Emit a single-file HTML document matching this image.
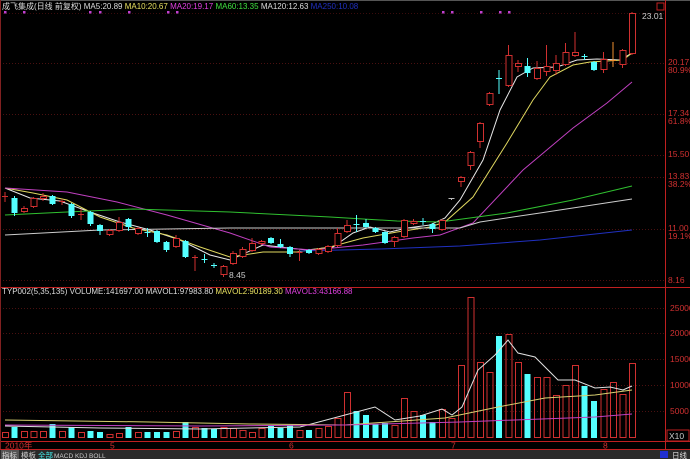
<!DOCTYPE html>
<html><head><meta charset="utf-8">
<style>
html,body{margin:0;padding:0;background:#000;width:690px;height:459px;overflow:hidden}
svg{display:block}
text{font-family:"Liberation Sans","Noto Sans CJK SC",sans-serif;font-size:8.5px}
</style></head><body>
<svg id="s" width="690" height="459" xmlns="http://www.w3.org/2000/svg">
<rect width="690" height="459" fill="#000"/>
<line x1="0" y1="0.5" x2="690" y2="0.5" stroke="#555"/>
<g id="grid"></g>
<line x1="665.5" y1="0" x2="665.5" y2="449" stroke="#c02020"/>
<line x1="0" y1="287.5" x2="690" y2="287.5" stroke="#c02020"/>
<line x1="0" y1="441.5" x2="690" y2="441.5" stroke="#c02020"/>
<line x1="0" y1="449.5" x2="690" y2="449.5" stroke="#c02020"/>
<line x1="0.5" y1="0" x2="0.5" y2="449" stroke="#802020"/>
<rect x="657" y="3" width="7" height="7" fill="none" stroke="#c02020"/>
<g id="lines"></g>
<g id="candles"></g>
<g id="vol"></g>
<text x="2" y="9" style="font-size:8px"><tspan fill="#ddd">成飞集成(日线 前复权) MA5:20.89 </tspan><tspan fill="#e8e060">MA10:20.67 </tspan><tspan fill="#e040e0">MA20:19.17 </tspan><tspan fill="#40e040">MA60:13.35 </tspan><tspan fill="#ddd">MA120:12.63 </tspan><tspan fill="#2030c0">MA250:10.08</tspan></text>
<text x="642" y="19" fill="#ccc">23.01</text>
<text x="229" y="278" fill="#ccc">8.45</text>
<text x="2" y="294" style="font-size:8px"><tspan fill="#ddd">TYP002(5,35,135) VOLUME:141697.00 MAVOL1:97983.80 </tspan><tspan fill="#e8e060">MAVOL2:90189.30 </tspan><tspan fill="#e040e0">MAVOL3:43166.88</tspan></text>
<g fill="#d03030">
<text x="668" y="65">20.17</text><text x="668" y="73">80.9%</text>
<text x="668" y="116">17.34</text><text x="668" y="124">61.8%</text>
<text x="668" y="157">15.50</text>
<text x="668" y="179">13.83</text><text x="668" y="187">38.2%</text>
<text x="668" y="231">11.00</text><text x="668" y="239">19.1%</text>
<text x="668" y="283">8.16</text>
<text x="670" y="311">25000</text><text x="670" y="336">20000</text>
<text x="670" y="362">15000</text><text x="670" y="388">10000</text>
<text x="670" y="414">5000</text>
<text x="5" y="448.5">2010年</text><text x="110" y="448.5">5</text><text x="289" y="448.5">6</text>
<text x="451" y="448.5">7</text><text x="603" y="448.5">8</text>
</g>
<rect x="667" y="430" width="22" height="11" fill="none" stroke="#c02020"/>
<text x="669" y="439" fill="#ccc">X10</text>
<rect x="0" y="450" width="690" height="9" fill="#2a2a2a"/>
<rect x="1" y="450" width="18" height="9" fill="#555"/>
<text x="2" y="458" fill="#ddd" style="font-size:7.5px">指标</text>
<text x="21" y="458" fill="#ccc" style="font-size:7.5px">模板</text>
<text x="38" y="458" fill="#4ee" style="font-size:7.5px">全部</text>
<text x="54" y="458" fill="#ccc" style="font-size:6.5px">MACD KDJ BOLL</text>
<rect x="660" y="451" width="8" height="7" fill="#2030d0"/>
<text x="672" y="458" fill="#ddd" style="font-size:7.5px">日线</text>
</svg>
<script>
const NS="http://www.w3.org/2000/svg";
function el(p,t,a){const e=document.createElementNS(NS,t);for(const k in a)e.setAttribute(k,a[k]);document.getElementById(p).appendChild(e);return e;}
[63,114,155,177,229,280].forEach(y=>el("grid","line",{x1:0,y1:y+.5,x2:665,y2:y+.5,stroke:"#4a1010","stroke-dasharray":"1,2"}));
[13].forEach(y=>el("grid","line",{x1:0,y1:y+.5,x2:665,y2:y+.5,stroke:"#3a0c0c","stroke-dasharray":"1,2"}));
[308,333,359,385,411].forEach(y=>el("grid","line",{x1:0,y1:y+.5,x2:665,y2:y+.5,stroke:"#4a1010","stroke-dasharray":"1,2"}));
[5,24,90,100,129,168,177,443,452,481,500,509].forEach(x=>el("grid","rect",{x:x-1,y:11,width:2.5,height:2.5,fill:"#c040d0"}));
const C=[
["r",196,198,192,202],["c",198,213,196,216],["r",208,212,206,213],["r",198,207,197,208],["r",196,199,193,201],
["c",196,204,195,205],["r",201,203,199,205],["c",204,216,203,218],["r",214,216,209,220],["c",212,224,211,226],
["c",225,231,224,235],["r",230,235,229,236],["r",222,231,217,232],["c",219,227,218,231],["r",228,234,227,235],
["c",232,234,228,237],["c",231,242,230,243],["c",242,250,241,252],["r",238,247,235,248],["c",241,257,240,258],
["r",257,259,255,271],["c",259,261,254,263],["c",265,267,263,268],["r",266,275,265,277],["r",253,264,251,265],
["r",249,257,247,258],["r",243,251,238,252],["r",241,244,240,245],["c",238,243,237,244],["c",244,247,239,248],
["c",247,254,246,257],["r",252,254,250,261],["c",250,253,249,254],["r",249,254,248,255],["r",246,252,245,253],
["r",233,246,228,247],["r",225,232,220,233],["c",224,226,215,232],["c",223,227,219,228],["c",228,232,227,233],
["c",232,243,231,244],["r",237,242,236,247],["r",220,237,219,238],["r",221,224,219,225],["c",221,223,218,225],
["c",224,229,223,233],["r",220,230,219,231],["g",198,200,198,200],["r",177,182,176,187],["r",152,166,151,170],
["r",123,142,122,148],["r",93,105,92,106],["c",78,80,70,94],["r",55,86,45,87],["r",63,67,60,72],
["c",66,73,58,77],["r",68,79,61,80],["r",66,72,45,76],["r",63,71,55,75],["r",52,65,43,66],
["r",52,56,32,57],["c",56,58,54,60],["c",62,70,61,71],["r",59,70,52,73],["o",60,62,42,67],
["r",50,65,49,68],["r",13,54,12,55]];
const X=i=>5+9.5*i;
C.forEach((c,i)=>{const x=X(i);let col=c[0]=="c"?"#54ffff":c[0]=="g"?"#bbb":c[0]=="o"?"#f09030":"#d03030";
el("candles","line",{x1:x,y1:c[3],x2:x,y2:c[4],stroke:col});
let h=c[2]-c[1];
if(h<=2){el("candles","line",{x1:x-3,y1:c[1]+.5,x2:x+3,y2:c[1]+.5,stroke:col});}
else if(c[0]=="c"){el("candles","rect",{x:x-3,y:c[1],width:6,height:h,fill:col});}
else {el("candles","rect",{x:x-2.5,y:c[1]+.5,width:6,height:h-1,fill:"#000",stroke:col});}
});
function pl(pts,col){el("lines","polyline",{points:pts.map(p=>p.join(",")).join(" "),fill:"none",stroke:col,"stroke-width":1});}
pl([[5,188],[30,198],[60,201],[90,212],[120,222],[150,230],[180,240],[210,255],[230,260],[263,245],[280,247],[307,250],[333,247],[353,233],[370,227],[390,232],[407,228],[430,225],[445,218],[460,200],[483,160],[500,110],[517,77],[533,68],[557,67],[577,60],[597,59],[620,60],[632,53]],"#e8e8e8");
pl([[5,188],[33,193],[67,200],[100,217],[133,228],[167,235],[200,247],[230,257],[263,252],[297,252],[330,247],[363,238],[397,232],[430,227],[445,222],[473,197],[507,143],[533,100],[550,77],[573,65],[590,62],[623,60],[632,53]],"#e0d860");
pl([[5,188],[67,192],[117,202],[167,215],[230,233],[270,247],[313,250],[363,245],[413,238],[440,235],[473,223],[523,170],[573,128],[607,103],[632,82]],"#c040c0");
pl([[5,215],[67,212],[133,209],[230,212],[330,217],[397,221],[440,222],[507,213],[573,200],[632,186]],"#30c030");
pl([[5,235],[100,230],[230,228],[460,228],[480,222],[540,213],[632,199]],"#cccccc");
pl([[300,251],[380,249],[460,246],[540,240],[632,230]],"#2030c0");
const V=[432,427,431,431,431,424,431,427,432,431,432,434,433,427,432,432,432,432,431,422,427,428,429,427,428,430,432,428,426,428,425,430,430,428,426,418,392,411,415,424,423,425,398,411,415,422,409,418,365,297,362,372,336,334,362,374,377,377,395,385,365,386,401,389,382,394,363];
V.forEach((t,i)=>{const x=X(i),c=C[i][0];
if(c=="c")el("vol","rect",{x:x-3,y:t,width:6,height:438-t,fill:"#54ffff"});
else el("vol","rect",{x:x-2.5,y:t+.5,width:6,height:438-t-1,fill:"none",stroke:"#d03030"});});
function vl(pts,col){el("vol","polyline",{points:pts.map(p=>p.join(",")).join(" "),fill:"none",stroke:col});}
vl([[5,426],[100,428],[200,429],[300,427],[345,415],[375,407],[395,420],[420,416],[442,409],[452,415],[462,407],[478,370],[495,355],[508,340],[518,353],[535,357],[558,380],[575,380],[595,388],[610,387],[623,390],[632,386]],"#e0e0e0");
vl([[5,420],[150,422],[250,424],[345,425],[445,418],[498,407],[545,398],[595,395],[632,390]],"#d8d070");
vl([[5,425],[200,426],[345,425],[460,422],[595,417],[632,414]],"#c040c0");
</script>
</body></html>
